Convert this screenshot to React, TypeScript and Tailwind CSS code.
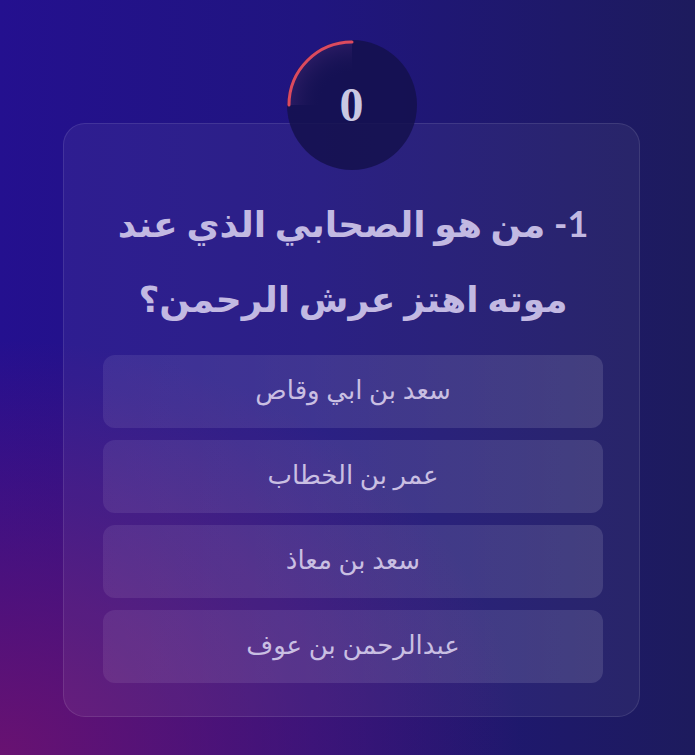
// Quiz question screen: countdown ring over a glass card with the question and four answers.

const answers = ["سعد بن ابي وقاص", "عمر بن الخطاب", "سعد بن معاذ", "عبدالرحمن بن عوف"];

function Timer({ value }: { value: number }) {
  const size = 130;
  const r = 63;
  const c = size / 2;
  return (
    <div className="relative z-10 h-[130px] w-[130px]">
      <svg width={size} height={size} viewBox={`0 0 ${size} ${size}`} className="absolute inset-0">
        <defs>
          <radialGradient id="glow" cx="65" cy="65" r="65" gradientUnits="userSpaceOnUse">
            <stop offset="0.5" stopColor="#1a1658" stopOpacity="0" />
            <stop offset="1" stopColor="#4a2a7a" stopOpacity="0.45" />
          </radialGradient>
        </defs>
        {/* Face */}
        <circle cx={c} cy={c} r={65} fill="#14114c" fillOpacity="0.85" />
        {/* Elapsed quarter */}
        <path d={`M ${c} ${c} L ${c} ${c - 65} A 65 65 0 0 0 ${c - 65} ${c} Z`} fill="url(#glow)" />
        <path
          d={`M ${c} ${c - r} A ${r} ${r} 0 0 0 ${c - r} ${c}`}
          fill="none"
          stroke="#dc4a5e"
          strokeWidth={3}
          strokeLinecap="round"
        />
      </svg>
      <div className="absolute inset-0 flex items-center justify-center">
        <span className="font-['Liberation_Serif',serif] text-[48px] font-bold leading-none text-[#c9c8e2]">
          {value}
        </span>
      </div>
    </div>
  );
}

export default function App() {
  return (
    <div
      dir="rtl"
      className="flex min-h-screen w-full flex-col items-center bg-[radial-gradient(ellipse_75%_55%_at_0%_100%,rgba(112,18,110,0.9),transparent),linear-gradient(90deg,#24108f_0%,#20157f_45%,#1d1b5d_100%)] pl-2 pt-10 font-['Lato','DejaVu_Sans',sans-serif]"
    >
      <Timer value={0} />

      <div className="-mt-[47px] w-[577px] rounded-[22px] border border-white/10 bg-white/5 pb-[33px] pl-[39px] pr-[36px] pt-[62px]">
        <h1 className="text-center text-[36px] font-bold leading-[75px] text-[#c2b9e2]">
          1- من هو الصحابي الذي عند موته اهتز عرش الرحمن؟
        </h1>

        <div className="mt-[19px] flex flex-col gap-3">
          {answers.map((a) => (
            <button
              key={a}
              className="flex h-[73px] items-center justify-center rounded-xl bg-[linear-gradient(90deg,rgba(255,255,255,0.08),rgba(255,255,255,0.12))] pb-1 text-[26px] text-[#c9bfe2]"
            >
              {a}
            </button>
          ))}
        </div>
      </div>
    </div>
  );
}
